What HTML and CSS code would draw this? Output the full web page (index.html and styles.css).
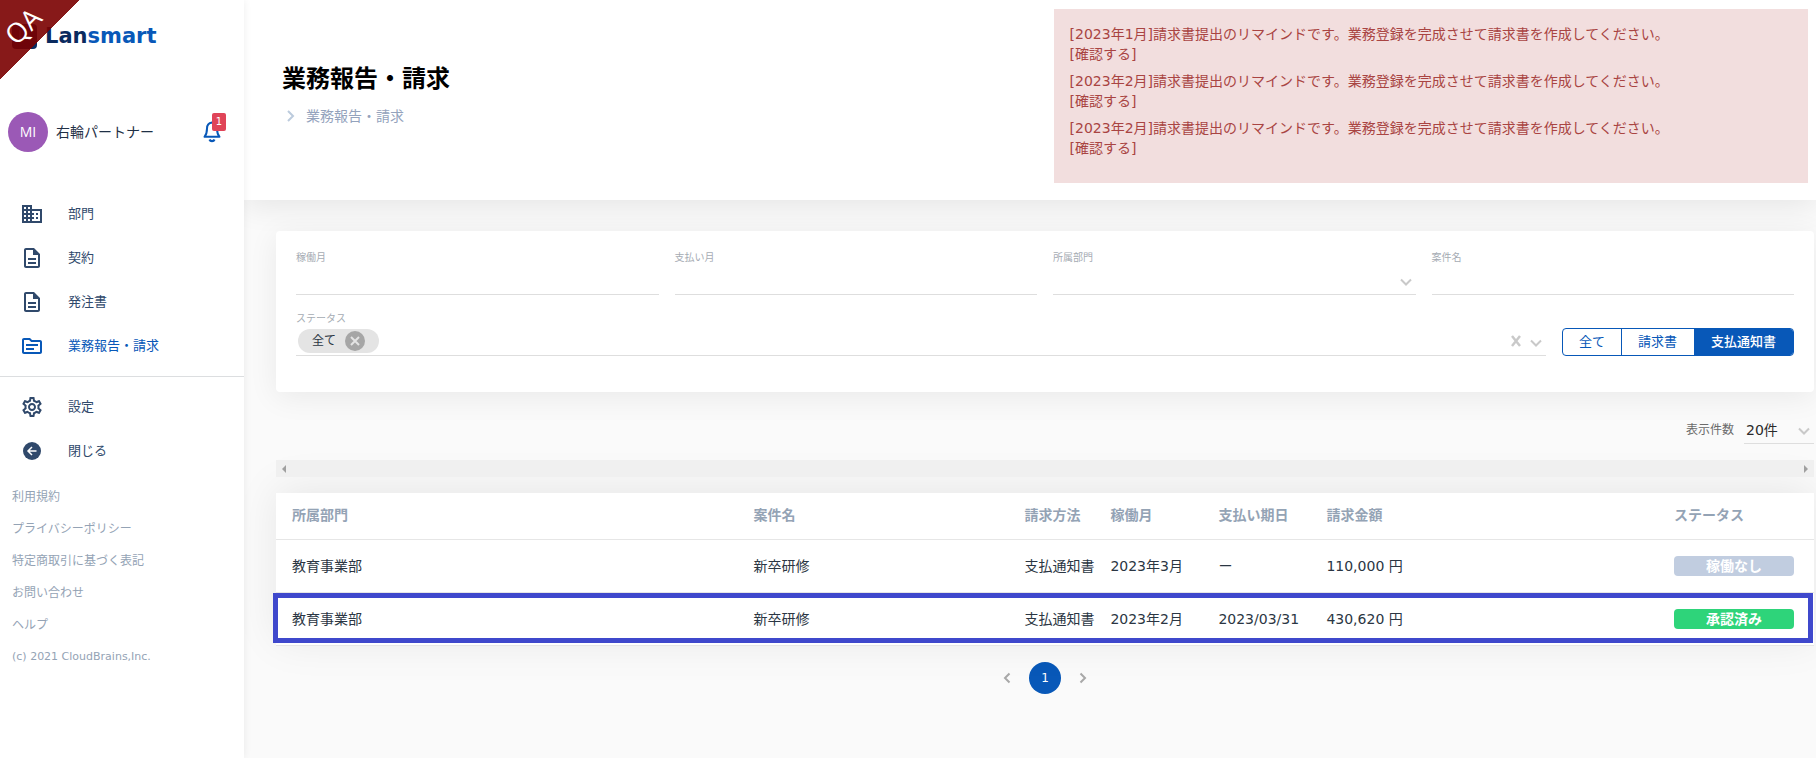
FILE: index.html
```html
<!DOCTYPE html>
<html lang="ja">
<head>
<meta charset="utf-8">
<title>業務報告・請求 | Lansmart</title>
<meta name="viewport" content="width=device-width, initial-scale=1">
<link rel="stylesheet" href="styles.css">
</head>
<body>
<div class="app">
  <aside class="sidebar">
    <div class="env-ribbon"><span class="env-text">QA</span></div>
    <a class="brand" href="#">
      <svg class="brand-mark" width="25" height="25" viewBox="0 0 25 25" aria-hidden="true"><rect width="25" height="25" rx="4" fill="#0a2a5e"/><path d="M8 6v8h12" stroke="#fff" stroke-width="1" stroke-opacity=".5" fill="none"/></svg>
      <span class="brand-name">Lan<span class="brand-accent">smart</span></span>
    </a>
    <div class="user">
      <span class="avatar">MI</span>
      <span class="user-name">右輪パートナー</span>
      <button class="bell" type="button" aria-label="通知">
        <svg width="18" height="22" viewBox="0 0 18 22" fill="none" stroke="#0858b8" stroke-width="2" aria-hidden="true"><path d="M9 1.5C5.5 2 4 4.5 4 7.500c0 4-.6 6-2.500 8.300h15C14.600 13.500 14 11.500 14 7.500 14 4.500 12.500 2 9 1.500z" stroke-linejoin="round"/><path d="M6.500 18.500c.5 1.300 1.300 1.700 2.500 1.700s2-.4 2.500-1.700" stroke-width="2.200"/></svg>
        <span class="bell-count">1</span>
      </button>
    </div>
    <nav class="menu">
      <a class="menu-item" href="#"><svg class="icon" viewBox="0 0 24 24" aria-hidden="true"><path d="M18,15H16V17H18M18,11H16V13H18M20,19H12V17H14V15H12V13H14V11H12V9H20M10,7H8V5H10M10,11H8V9H10M10,15H8V13H10M10,19H8V17H10M6,7H4V5H6M6,11H4V9H6M6,15H4V13H6M6,19H4V17H6M12,7V3H2V21H22V7H12Z"/></svg>部門</a>
      <a class="menu-item" href="#"><svg class="icon" viewBox="0 0 24 24" aria-hidden="true"><path d="M8 16h8v2H8zm0-4h8v2H8zm6-10H6c-1.1 0-2 .9-2 2v16c0 1.100.89 2 1.990 2H18c1.100 0 2-.9 2-2V8l-6-6zm4 18H6V4h7v5h5v11z"/></svg>契約</a>
      <a class="menu-item" href="#"><svg class="icon" viewBox="0 0 24 24" aria-hidden="true"><path d="M8 16h8v2H8zm0-4h8v2H8zm6-10H6c-1.1 0-2 .9-2 2v16c0 1.100.89 2 1.990 2H18c1.100 0 2-.9 2-2V8l-6-6zm4 18H6V4h7v5h5v11z"/></svg>発注書</a>
      <a class="menu-item menu-item-active" href="#" aria-current="page"><svg class="icon" viewBox="0 0 24 24" aria-hidden="true"><path d="M20 6h-8l-2-2H4c-1.1 0-1.990.9-1.990 2L2 18c0 1.100.9 2 2 2h16c1.100 0 2-.9 2-2V8c0-1.100-.9-2-2-2zm0 12H4V6h5.170l2 2H20v10zm-2-6H6v-2h12v2zm-4 4H6v-2h8v2z"/></svg>業務報告・請求</a>
    </nav>
    <nav class="menu menu-secondary">
      <a class="menu-item" href="#"><svg class="icon" viewBox="0 0 24 24" aria-hidden="true"><path d="M19.43 12.98c.04-.32.07-.64.07-.98 0-.34-.03-.66-.07-.98l2.11-1.65c.19-.15.24-.42.12-.64l-2-3.46c-.09-.16-.26-.25-.44-.25-.06 0-.12.01-.17.03l-2.49 1c-.52-.4-1.08-.73-1.69-.98l-.38-2.65C14.46 2.18 14.25 2 14 2h-4c-.25 0-.46.18-.49.42l-.38 2.65c-.61.25-1.17.59-1.69.98l-2.49-1c-.06-.02-.12-.03-.18-.03-.17 0-.34.09-.43.25l-2 3.46c-.13.22-.07.49.12.64l2.11 1.65c-.04.32-.07.65-.07.98 0 .33.03.66.07.98l-2.11 1.65c-.19.15-.24.42-.12.64l2 3.46c.09.16.26.25.44.25.06 0 .12-.01.17-.03l2.49-1c.52.4 1.08.73 1.69.98l.38 2.65c.03.24.24.42.49.42h4c.25 0 .46-.18.49-.42l.38-2.65c.61-.25 1.17-.59 1.69-.98l2.49 1c.06.02.12.03.18.03.17 0 .34-.09.43-.25l2-3.46c.12-.22.07-.49-.12-.64l-2.11-1.65zm-1.98-1.71c.04.31.05.52.05.73 0 .21-.02.43-.05.73l-.14 1.13.89.7 1.08.84-.7 1.21-1.27-.51-1.04-.42-.9.68c-.43.32-.84.56-1.25.73l-1.06.43-.16 1.13-.2 1.35h-1.4l-.19-1.35-.16-1.13-1.06-.43c-.43-.18-.83-.41-1.23-.71l-.91-.7-1.06.43-1.27.51-.7-1.21 1.08-.84.89-.7-.14-1.13c-.03-.31-.05-.54-.05-.74s.02-.43.05-.73l.14-1.13-.89-.7-1.08-.84.7-1.21 1.27.51 1.04.42.9-.68c.43-.32.84-.56 1.25-.73l1.06-.43.16-1.13.2-1.35h1.39l.19 1.35.16 1.13 1.06.43c.43.18.83.41 1.23.71l.91.7 1.06-.43 1.27-.51.7 1.21-1.07.85-.89.7.14 1.13zM12 8c-2.21 0-4 1.79-4 4s1.79 4 4 4 4-1.790 4-4-1.790-4-4-4zm0 6c-1.100 0-2-.9-2-2s.9-2 2-2 2 .9 2 2-.9 2-2 2z"/></svg>設定</a>
      <a class="menu-item" href="#"><svg class="icon" viewBox="0 0 24 24" aria-hidden="true"><circle cx="12" cy="12" r="9"/><path d="M16.500 12H8.500M12 8l-4 4 4 4" fill="none" stroke="#fff" stroke-width="1.500"/></svg>閉じる</a>
    </nav>
    <div class="legal">
      <a href="#">利用規約</a>
      <a href="#">プライバシーポリシー</a>
      <a href="#">特定商取引に基づく表記</a>
      <a href="#">お問い合わせ</a>
      <a href="#">ヘルプ</a>
      <small class="copyright">(c) 2021 CloudBrains,Inc.</small>
    </div>
  </aside>

  <div class="page">
    <header class="page-head">
      <div class="heading">
        <h1 class="title">業務報告・請求</h1>
        <div class="crumbs">
          <svg width="16" height="16" viewBox="0 0 16 16" fill="none" stroke="#bccbdd" stroke-width="2" aria-hidden="true"><path d="M6 3l5 5-5 5"/></svg>
          <span>業務報告・請求</span>
        </div>
      </div>
      <div class="alert" role="alert">
        <p class="alert-item">[2023年1月]請求書提出のリマインドです。業務登録を完成させて請求書を作成してください。<a href="#">[確認する]</a></p>
        <p class="alert-item">[2023年2月]請求書提出のリマインドです。業務登録を完成させて請求書を作成してください。<a href="#">[確認する]</a></p>
        <p class="alert-item">[2023年2月]請求書提出のリマインドです。業務登録を完成させて請求書を作成してください。<a href="#">[確認する]</a></p>
      </div>
    </header>

    <main class="content">
      <form class="filters">
        <div class="filter-row">
          <div class="field"><label for="work-month">稼働月</label><input class="control" id="work-month" type="text"></div>
          <div class="field"><label for="pay-month">支払い月</label><input class="control" id="pay-month" type="text"></div>
          <div class="field"><label for="dept">所属部門</label>
            <select class="control select" id="dept"><option></option><option>教育事業部</option></select>
            <svg class="caret" viewBox="0 0 12 12" aria-hidden="true"><path d="M1 3.500l5 5 5-5"/></svg>
          </div>
          <div class="field"><label for="project">案件名</label><input class="control" id="project" type="text"></div>
        </div>
        <div class="status-row">
          <div class="field status-field"><label for="status">ステータス</label>
            <div class="control tags">
              <span class="chip">全て
                <button class="chip-remove" type="button" aria-label="全てを外す"><svg width="20" height="20" viewBox="0 0 20 20" aria-hidden="true"><circle cx="10" cy="10" r="10" fill="#a6a6a6"/><path d="M6 6l8 8M14 6l-8 8" stroke="#e4e4e4" stroke-width="2"/></svg></button>
              </span>
              <input class="tag-input" id="status" type="text">
              <button class="clear" type="button" aria-label="クリア"><svg width="12" height="12" viewBox="0 0 12 12" aria-hidden="true"><path d="M2 1l8 10M10 1L2 11" stroke="#c9c9c9" stroke-width="2.500"/></svg></button>
            </div>
            <svg class="caret" viewBox="0 0 12 12" aria-hidden="true"><path d="M1 3.500l5 5 5-5"/></svg>
          </div>
          <div class="segments">
            <button class="segment" type="button">全て</button>
            <button class="segment" type="button">請求書</button>
            <button class="segment segment-on" type="button" aria-pressed="true">支払通知書</button>
          </div>
        </div>
      </form>

      <div class="page-size">
        <label for="size">表示件数</label>
        <div class="field size-field">
          <select class="control select" id="size"><option>20件</option><option>50件</option></select>
          <svg class="caret" viewBox="0 0 12 12" aria-hidden="true"><path d="M1 3.500l5 5 5-5"/></svg>
        </div>
      </div>

      <section class="results">
        <div class="scroll-track">
          <svg width="4" height="8" viewBox="0 0 4 8" aria-hidden="true"><path d="M4 0v8L0 4z"/></svg>
          <svg width="4" height="8" viewBox="0 0 4 8" aria-hidden="true"><path d="M0 0v8l4-4z"/></svg>
        </div>
        <div class="table-card">
          <table class="table">
            <colgroup><col class="c-dept"><col class="c-project"><col class="c-method"><col class="c-date"><col class="c-date"><col><col class="c-status"></colgroup>
            <thead><tr><th>所属部門</th><th>案件名</th><th>請求方法</th><th>稼働月</th><th>支払い期日</th><th>請求金額</th><th>ステータス</th></tr></thead>
            <tbody>
              <tr><td>教育事業部</td><td>新卒研修</td><td>支払通知書</td><td>2023年3月</td><td>ー</td><td>110,000 円</td><td><span class="badge badge-idle">稼働なし</span></td></tr>
              <tr><td>教育事業部</td><td>新卒研修</td><td>支払通知書</td><td>2023年2月</td><td>2023/03/31</td><td>430,620 円</td><td><span class="badge badge-approved">承認済み</span></td></tr>
            </tbody>
          </table>
          <div class="highlight"></div>
        </div>
      </section>

      <nav class="pager" aria-label="ページ">
        <button class="pager-step" type="button" aria-label="前へ"><svg width="8" height="12" viewBox="0 0 8 12" aria-hidden="true"><path d="M6.500 1.500L2 6l4.500 4.500"/></svg></button>
        <button class="pager-page" type="button" aria-current="page">1</button>
        <button class="pager-step" type="button" aria-label="次へ"><svg width="8" height="12" viewBox="0 0 8 12" aria-hidden="true"><path d="M1.500 1.500L6 6l-4.500 4.500"/></svg></button>
      </nav>
    </main>
  </div>
</div>
</body>
</html>
```
FILE: styles.css
```css
* { box-sizing: border-box; }

body {
  margin: 0;
  background: #fafafa;
  color: #2b3643;
  font: 14px/20px "DejaVu Sans", "Noto Sans CJK JP", sans-serif;
}

a { color: inherit; text-decoration: none; }
button, input, select { font: inherit; color: inherit; }
button { padding: 0; border: 0; background: none; cursor: pointer; }
svg { display: block; flex: none; }

.app {
  display: grid;
  grid-template-columns: 244px minmax(0, 1fr);
  min-height: 100vh;
}

/* Sidebar */
.sidebar {
  position: relative;
  z-index: 2;
  background: #fff;
  box-shadow: 0 0 8px rgba(0, 0, 0, 0.07);
}

.env-ribbon {
  position: absolute;
  top: 0;
  left: 0;
  width: 80px;
  height: 80px;
  padding: 14px 0 0;
  background: linear-gradient(135deg, rgba(122, 0, 0, 0.9) 50%, transparent 50%);
  color: #fff;
}

.env-text {
  display: block;
  width: 46px;
  font: 27px/24px "Open Sans", sans-serif;
  text-align: center;
  transform: rotate(-45deg);
}

.brand {
  display: flex;
  align-items: center;
  gap: 8px;
  height: 72px;
  padding-left: 12px;
}

.brand-name { color: #0a2a5e; font-size: 21px; font-weight: 700; line-height: 28px; }
.brand-accent { color: #0858b8; }

.user {
  display: flex;
  align-items: center;
  gap: 8px;
  margin: 40px 23px 40px 8px;
}

.avatar {
  width: 40px;
  height: 40px;
  border-radius: 50%;
  background: #9b59b6;
  color: #fff;
  font: 14px/40px "Open Sans", sans-serif;
  text-align: center;
}

.user-name { flex: 1; color: #1f3046; }
.bell { position: relative; }

.bell-count {
  position: absolute;
  top: -8px;
  left: 9px;
  width: 14px;
  border-radius: 2px;
  background: #e04458;
  color: #fff;
  font-size: 10px;
  line-height: 18px;
}

.menu-item {
  display: flex;
  align-items: center;
  gap: 24px;
  height: 44px;
  padding-left: 20px;
  color: #30496b;
  font-size: 13px;
}

.icon { width: 24px; height: 24px; fill: currentColor; }
.menu-item-active { color: #0858b8; }

.menu-secondary {
  margin-top: 8px;
  padding: 8px 0;
  border-top: 1px solid #dcdee0;
}

.legal {
  display: flex;
  flex-direction: column;
  padding-left: 12px;
  color: #94a3b5;
  font-size: 12px;
  line-height: 32px;
}

.copyright { font-size: 11px; }

/* Page header */
.page-head {
  display: grid;
  grid-template-columns: minmax(0, 1fr) minmax(0, 48.5%);
  min-height: 200px;
  background: #fff;
  box-shadow: 0 5px 30px rgba(0, 0, 0, 0.09);
}

.heading { padding: 63px 0 0 38px; }

.title {
  margin: 0 0 11px;
  color: #000;
  font-size: 24px;
  font-weight: 700;
  line-height: 32px;
}

.crumbs { display: flex; align-items: center; gap: 8px; color: #94a3bd; }

.alert {
  margin: 9px 8px 17px 0;
  padding: 15px 16px 17px;
  background: #f2dede;
  color: #a94442;
}

.alert-item { margin: 0 0 7px; }
.alert-item a { display: block; }

/* Filters */
.page { overflow: hidden; }
.content { padding: 31px 2px 16px 32px; }

.filters {
  display: grid;
  gap: 15px;
  padding: 18px 20px 36px;
  border-radius: 4px;
  background: #fff;
  box-shadow: 0 5px 30px rgba(0, 0, 0, 0.07);
}

.filter-row { display: grid; grid-template-columns: repeat(4, minmax(0, 1fr)); gap: 16px; }
.status-row { display: flex; align-items: flex-end; gap: 16px; }
.field { position: relative; display: flex; flex-direction: column; }
.status-field { flex: 1; }

.field label { color: #a5abb3; font-size: 10px; line-height: 18px; }

.control {
  width: 100%;
  height: 28px;
  padding: 0;
  border: 0;
  border-bottom: 1px solid #dedede;
  border-radius: 0;
  outline: 0;
  background: none;
}

.select { appearance: none; }

.caret {
  position: absolute;
  right: 4px;
  bottom: 7px;
  width: 12px;
  height: 12px;
  fill: none;
  stroke: #c9c9c9;
  stroke-width: 2;
}

.tags { display: flex; align-items: center; padding: 0 24px 2px 2px; }

.chip {
  display: flex;
  align-items: center;
  gap: 9px;
  height: 24px;
  padding: 0 14px;
  border-radius: 12px;
  background: #e4e4e4;
  font-size: 12px;
}

.tag-input { flex: 1; min-width: 0; border: 0; outline: 0; background: none; }

.segments {
  display: flex;
  height: 28px;
  overflow: hidden;
  border: 1px solid #0858b8;
  border-radius: 4px;
  color: #0858b8;
  font-size: 13px;
}

.segment { padding: 0 16px; }
.segment + .segment { padding: 0 17px 0 16px; border-left: 1px solid #0858b8; }
.segment + .segment-on { background: #0858b8; color: #fff; font-weight: 500; }

.page-size {
  display: flex;
  align-items: center;
  justify-content: flex-end;
  gap: 10px;
  margin: 24px 0 16px;
  color: #6b6b6b;
  font-size: 12px;
}

.size-field { width: 70px; color: #2b2b2b; font-size: 14px; }
.size-field .select { padding-left: 2px; }

/* Results */
.scroll-track {
  position: relative;
  z-index: 1;
  display: flex;
  align-items: center;
  justify-content: space-between;
  height: 17px;
  margin-bottom: 16px;
  padding: 0 6px;
  background: #f0f0f0;
  fill: #a0a0a0;
}

.table-card {
  position: relative;
  background: #fff;
  box-shadow: 0 -5px 40px rgba(0, 0, 0, 0.08);
}

.table { width: 100%; border-collapse: collapse; table-layout: fixed; }
.c-dept { width: 30%; }
.c-project { width: 271px; }
.c-method { width: 86px; }
.c-date { width: 108px; }
.c-status { width: 156px; }

.table th,
.table td {
  height: 53px;
  padding: 0 0 0 16px;
  border-bottom: 1px solid #e6e6e6;
  text-align: left;
  white-space: nowrap;
}

.table th { height: 46px; padding-bottom: 2px; color: #94a3b5; font-weight: 700; }

.badge {
  display: block;
  width: 120px;
  border-radius: 4px;
  color: #fff;
  font-weight: 700;
  text-align: center;
}

.badge-idle { background: #c1cde0; }
.badge-approved { background: #2ed47a; }

.highlight {
  position: absolute;
  right: 1px;
  bottom: 3px;
  left: -3px;
  height: 50px;
  border: 5px solid #3f48cc;
  pointer-events: none;
}

.pager {
  display: flex;
  align-items: center;
  justify-content: center;
  gap: 18px;
  margin-top: 16px;
}

.pager-step svg { fill: none; stroke: #a8a8a8; stroke-width: 2; }

.pager-page {
  width: 32px;
  height: 32px;
  border-radius: 50%;
  background: #0858b8;
  color: #fff;
  font-size: 12px;
}
```
